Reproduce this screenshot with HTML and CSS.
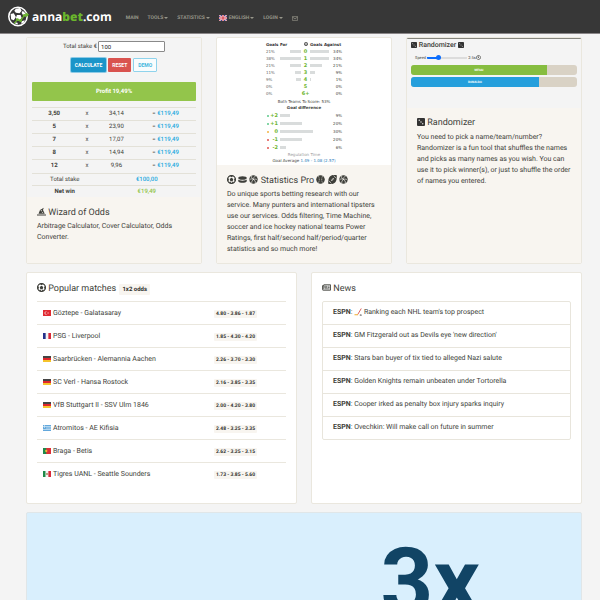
FILE: index.html
```html
<!DOCTYPE html>
<html lang="en">
<head>
    <meta charset="UTF-8">
    <meta name="viewport" content="width=device-width, initial-scale=1">
    <title>annabet.com</title>
    <link rel="stylesheet" href="styles.css">
</head>
<body>
    <!-- shared icons -->
    <svg class="defs" aria-hidden="true">
        <symbol id="ball" viewBox="0 0 16 16">
            <circle cx="8" cy="8" r="6.900" fill="none" stroke="currentColor" stroke-width="2.200"/>
            <path fill="currentColor" d="M8 4.800l3.200 2.300-1.200 3.800H6L4.800 7.100zM4.500 1h7L8 4zM.500 5.500l3 1.800L2 11.500.500 10zM15.500 5.500l-3 1.800 1.500 4.200 1.500-1.500zM3 12.500l3.500-.500.900 3.500zM13 12.500l-3.500-.500-.900 3.500z"/>
        </symbol>
        <symbol id="dice" viewBox="0 0 16 16">
            <rect x="0" y="0" width="16" height="16" rx="2" fill="#333"/>
            <g fill="#eee"><circle cx="4.500" cy="4.500" r="1.300"/><circle cx="8" cy="8" r="1.300"/><circle cx="11.500" cy="11.500" r="1.300"/></g>
        </symbol>
        <symbol id="puck" viewBox="0 0 18 16">
            <ellipse cx="9" cy="5" rx="8.500" ry="3.500" fill="currentColor"/>
            <path fill="currentColor" d="M.500 8c2 3 15 3 17 0v3.500c-2 4-15 4-17 0z"/>
        </symbol>
        <symbol id="volley" viewBox="0 0 16 16">
            <circle cx="8" cy="8" r="7.600" fill="currentColor"/>
            <path fill="none" stroke="#f8f5f0" stroke-width="1.200" d="M8 8c0-3 1-5 4-6.500M8 8C5.500 6.500 3 6.500.500 9M8 8c2.500 1.500 4 3.500 3 7M5 1.500C4 4 4.500 6 8 8M8 8c2.500-1 5-1 7 1M8 8c-2.500 1.500-3.500 4-3 7"/>
        </symbol>
        <symbol id="baseball" viewBox="0 0 16 16">
            <circle cx="8" cy="8" r="7.600" fill="currentColor"/>
            <path fill="none" stroke="#f8f5f0" stroke-width="1" stroke-dasharray="2 1" d="M4 1.500c2.500 4 2.500 9 0 13M12 1.500c-2.500 4-2.500 9 0 13"/>
        </symbol>
        <symbol id="football" viewBox="0 0 16 16">
            <path fill="currentColor" d="M15.500.500C7-2-1 2 .500 15.500 9 18 17 14 15.500.500z"/>
            <path fill="none" stroke="#f8f5f0" stroke-width="1.100" d="M5 11l6-6M6 8l2 2M8 6l2 2M1 10l5 5M10 1l5 5"/>
        </symbol>
        <symbol id="wizard" viewBox="0 0 18 16">
            <path fill="currentColor" d="M3 12.500L6 5 13.500.500 12 5l3.500 7.500zM0 13.800h18V16H0z"/>
            <path fill="#f8f5f0" d="M8.500 4.500l.600 1.500 1.500.500-1.500.500-.600 1.500-.600-1.500L6.400 6.500 7.900 6zM11 8.500l.500 1.200 1.200.400-1.200.400-.500 1.200-.500-1.200-1.200-.400 1.200-.400z"/>
        </symbol>
        <symbol id="paper" viewBox="0 0 20 16">
            <path fill="none" stroke="currentColor" stroke-width="2" d="M4 2h15v12H2.500Q1 14 1 12.500V4h3zM4 4v8.500"/>
            <path fill="none" stroke="currentColor" stroke-width="1.600" d="M6.500 5h4v3.500h-4zM12.500 5H17M12.500 8H17M6.500 11H17"/>
        </symbol>
        <symbol id="mail" viewBox="0 0 16 12">
            <path fill="none" stroke="currentColor" stroke-width="1.800" d="M1 1h14v10H1zM1 2l7 5 7-5"/>
        </symbol>
        <symbol id="clock" viewBox="0 0 16 16">
            <path fill="none" stroke="currentColor" stroke-width="2.200" d="M8 1.500a6.500 6.500 0 1 0 .1 0zM8 4.500v4l2.500 2M8 8L5 6"/>
        </symbol>
        <symbol id="stick" viewBox="0 0 16 16">
            <path fill="none" stroke="#d9534f" stroke-width="1.800" d="M14.500 1L7.500 13"/>
            <path fill="none" stroke="#f0ad2e" stroke-width="2.400" d="M8 13.500H1"/>
            <ellipse cx="13.500" cy="14" rx="2.200" ry="1.200" fill="#333"/>
        </symbol>
        <symbol id="gb" viewBox="0 0 16 12">
            <path fill="#2a3f8f" d="M0 0h16v12H0z"/>
            <path stroke="#fff" stroke-width="2.600" d="M0 0l16 12M16 0L0 12"/>
            <path stroke="#cf2b3c" stroke-width="1" d="M0 0l16 12M16 0L0 12"/>
            <path stroke="#fff" stroke-width="4" d="M8 0v12M0 6h16"/>
            <path stroke="#cf2b3c" stroke-width="2.200" d="M8 0v12M0 6h16"/>
        </symbol>
        <symbol id="tr" viewBox="0 0 16 12">
            <path fill="#e02a32" d="M0 0h16v12H0z"/>
            <circle cx="6" cy="6" r="3" fill="#fff"/><circle cx="6.900" cy="6" r="2.400" fill="#e02a32"/>
            <path fill="#fff" d="M9 6l2.500-1.200v2.400z"/>
        </symbol>
        <symbol id="fr" viewBox="0 0 16 12">
            <path fill="#25318a" d="M0 0h6v12H0z"/><path fill="#f4f4f4" d="M5.300 0h5.400v12H5.300z"/><path fill="#d8283a" d="M10.700 0H16v12h-5.300z"/>
        </symbol>
        <symbol id="de" viewBox="0 0 16 12">
            <path fill="#444" d="M0 0h16v4H0z"/><path fill="#e0262b" d="M0 4h16v4H0z"/><path fill="#f5c42c" d="M0 8h16v4H0z"/>
        </symbol>
        <symbol id="gr" viewBox="0 0 16 12">
            <path fill="#63a8dc" d="M0 0h16v12H0z"/>
            <path stroke="#d5e9f7" stroke-width="1.400" d="M6 3h10M6 6h10M0 9h16M3 0v6M0 3h6"/>
        </symbol>
        <symbol id="pt" viewBox="0 0 16 12">
            <path fill="#dc3038" d="M0 0h16v12H0z"/><path fill="#1e8a4a" d="M0 0h6.500v12H0z"/><circle cx="6.500" cy="6" r="2.300" fill="#e8b93a"/>
        </symbol>
        <symbol id="mx" viewBox="0 0 16 12">
            <path fill="#1e8a4a" d="M0 0h5.500v12H0z"/><path fill="#f4f4f4" d="M5.300 0h5.400v12H5.300z"/><path fill="#d8283a" d="M10.700 0H16v12h-5.300z"/><circle cx="8" cy="6" r="1.800" fill="#9a7a4a"/>
        </symbol>
    </svg>

    <header class="navbar">
        <a class="brand" href="#">
            <svg class="brand-ball" viewBox="0 0 40 40" aria-hidden="true">
                <circle cx="19" cy="20" r="17.500" fill="#373737" stroke="#fff" stroke-width="3"/>
                <path fill="#fff" d="M15 5l8-1 3 5-4 5-7-1-3-4zM28 9l5 5 1 6-5-2-3-5zM5 15l6-1 4 7-4 6-5-2zM17 17h7l2 6-6 5-5-5zM13 31l5 1 1 3-5-1zM26 29l6-2-2 5-5 2z"/>
                <path fill="none" stroke="#6ab52c" stroke-width="2.400" d="M12 33l6-7 6 2 7-10 5-1"/>
                <g fill="#6ab52c"><circle cx="18" cy="26" r="2.600"/><circle cx="24" cy="28" r="2.600"/><circle cx="31" cy="18" r="2.600"/><path d="M33 12l7 4-5 6z"/></g>
            </svg>
            <span>anna<b>bet</b>.com</span>
        </a>
        <nav class="menu">
            <a href="#">MAIN</a>
            <a class="drop" href="#">TOOLS</a>
            <a class="drop" href="#">STATISTICS</a>
            <a class="drop" href="#"><svg class="flag"><use href="#gb"/></svg>ENGLISH</a>
            <a class="drop" href="#">LOGIN</a>
            <a href="#" aria-label="Contact"><svg class="mail"><use href="#mail"/></svg></a>
        </nav>
    </header>

    <main class="container">
        <section class="cards three">
            <article class="card">
                <form class="calc" onsubmit="return false">
                    <div class="stake">
                        <label for="stake">Total stake €</label>
                        <input id="stake" type="text" value="100">
                    </div>
                    <div class="buttons">
                        <button class="calculate">CALCULATE</button>
                        <button class="reset" type="reset">RESET</button>
                        <button class="demo" type="button">DEMO</button>
                    </div>
                    <div class="profit">Profit 19,49%</div>
                    <table class="odds">
                        <tbody>
                            <tr><th>3,50</th><td>x</td><td>34,14</td><td>= <b>€119,49</b></td></tr>
                            <tr><th>5</th><td>x</td><td>23,90</td><td>= <b>€119,49</b></td></tr>
                            <tr><th>7</th><td>x</td><td>17,07</td><td>= <b>€119,49</b></td></tr>
                            <tr><th>8</th><td>x</td><td>14,94</td><td>= <b>€119,49</b></td></tr>
                            <tr><th>12</th><td>x</td><td>9,96</td><td>= <b>€119,49</b></td></tr>
                        </tbody>
                    </table>
                    <table class="totals">
                        <tbody>
                            <tr><td>Total stake</td><td class="blue">€100,00</td></tr>
                            <tr><th>Net win</th><td class="green">€19,49</td></tr>
                        </tbody>
                    </table>
                </form>
                <div class="card-body">
                    <h2><svg class="icon"><use href="#wizard"/></svg> Wizard of Odds</h2>
                    <p>Arbitrage Calculator, Cover Calculator, Odds Converter.</p>
                </div>
            </article>

            <article class="card">
                <div class="stats">
                    <table class="goals">
                        <colgroup><col class="pct"><col class="graph"><col class="num"><col class="graph"><col></colgroup>
                        <thead>
                            <tr><th colspan="2">Goals For</th><th class="mid"><svg class="mini"><use href="#ball"/></svg></th><th colspan="2">Goals Against</th></tr>
                        </thead>
                        <tbody>
                            <tr><td>21%</td><td class="for"><i style="width:54%"></i></td><th>0</th><td><i style="width:90%"></i></td><td>34%</td></tr>
                            <tr><td>38%</td><td class="for"><i style="width:98%"></i></td><th>1</th><td><i style="width:90%"></i></td><td>34%</td></tr>
                            <tr><td>21%</td><td class="for"><i style="width:54%"></i></td><th>2</th><td><i style="width:56%"></i></td><td>21%</td></tr>
                            <tr><td>11%</td><td class="for"><i style="width:28%"></i></td><th>3</th><td><i style="width:25%"></i></td><td>9%</td></tr>
                            <tr><td>9%</td><td class="for"><i style="width:23%"></i></td><th>4</th><td><i style="width:3%"></i></td><td>1%</td></tr>
                            <tr><td>0%</td><td class="for"></td><th>5</th><td></td><td>0%</td></tr>
                            <tr><td>0%</td><td class="for"></td><th>6+</th><td></td><td>0%</td></tr>
                        </tbody>
                    </table>
                    <p class="both">Both Teams To Score: 53%</p>
                    <p><b>Goal difference</b></p>
                    <table class="diff">
                        <tbody>
                            <tr><td><span class="dot win"></span></td><th>+2</th><td><i style="width:20%"></i></td><td>9%</td></tr>
                            <tr><td><span class="dot win"></span></td><th>+1</th><td><i style="width:46%"></i></td><td>20%</td></tr>
                            <tr><td><span class="dot draw"></span></td><th>0</th><td><i style="width:69%"></i></td><td>30%</td></tr>
                            <tr><td><span class="dot loss"></span></td><th>-1</th><td><i style="width:46%"></i></td><td>20%</td></tr>
                            <tr><td><span class="dot loss"></span></td><th>-2</th><td><i style="width:13%"></i></td><td>6%</td></tr>
                        </tbody>
                    </table>
                    <p class="muted">Regulation Time</p>
                    <p>Goal Average <span class="avg">1.49 - 1.08 (2.57)</span></p>
                </div>
                <div class="card-body">
                    <h2>
                        <svg class="icon"><use href="#ball"/></svg>
                        <svg class="icon"><use href="#puck"/></svg>
                        <svg class="icon"><use href="#volley"/></svg>
                        Statistics Pro
                        <svg class="icon"><use href="#baseball"/></svg>
                        <svg class="icon"><use href="#football"/></svg>
                        <svg class="icon"><use href="#volley"/></svg>
                    </h2>
                    <p>Do unique sports betting research with our service. Many punters and international tipsters use our services. Odds filtering, Time Machine, soccer and ice hockey national teams Power Ratings, first half/second half/period/quarter statistics and so much more!</p>
                </div>
            </article>

            <article class="card">
                <div class="random">
                    <h3><svg class="die"><use href="#dice"/></svg> Randomizer <svg class="die"><use href="#dice"/></svg></h3>
                    <div class="speed">
                        <label for="speed">Speed</label>
                        <input id="speed" type="range" min="0" max="100" value="25">
                        <span>2.5s</span><svg class="clock"><use href="#clock"/></svg>
                    </div>
                    <div class="bar"><span class="messi" style="width:82%">MESSI</span></div>
                    <div class="bar"><span class="ronaldo" style="width:77%">RONALDO</span></div>
                </div>
                <div class="card-body">
                    <h2><svg class="icon square"><use href="#dice"/></svg> Randomizer</h2>
                    <p>You need to pick a name/team/number? Randomizer is a fun tool that shuffles the names and picks as many names as you wish. You can use it to pick winner(s), or just to shuffle the order of names you entered.</p>
                </div>
            </article>
        </section>

        <section class="cards two">
            <article class="card panel">
                <h2><svg class="icon"><use href="#ball"/></svg> Popular matches <span class="badge big">1x2 odds</span></h2>
                <table class="matches">
                    <tbody>
                        <tr><td><svg class="flag"><use href="#tr"/></svg><a href="#">Göztepe - Galatasaray</a></td><td><span class="badge">4.80 - 3.86 - 1.87</span></td></tr>
                        <tr><td><svg class="flag"><use href="#fr"/></svg><a href="#">PSG - Liverpool</a></td><td><span class="badge">1.85 - 4.30 - 4.20</span></td></tr>
                        <tr><td><svg class="flag"><use href="#de"/></svg><a href="#">Saarbrücken - Alemannia Aachen</a></td><td><span class="badge">2.26 - 3.70 - 3.30</span></td></tr>
                        <tr><td><svg class="flag"><use href="#de"/></svg><a href="#">SC Verl - Hansa Rostock</a></td><td><span class="badge">2.16 - 3.85 - 3.35</span></td></tr>
                        <tr><td><svg class="flag"><use href="#de"/></svg><a href="#">VfB Stuttgart II - SSV Ulm 1846</a></td><td><span class="badge">2.00 - 4.20 - 3.80</span></td></tr>
                        <tr><td><svg class="flag"><use href="#gr"/></svg><a href="#">Atromitos - AE Kifisia</a></td><td><span class="badge">2.48 - 3.25 - 3.35</span></td></tr>
                        <tr><td><svg class="flag"><use href="#pt"/></svg><a href="#">Braga - Betis</a></td><td><span class="badge">2.62 - 3.25 - 3.15</span></td></tr>
                        <tr><td><svg class="flag"><use href="#mx"/></svg><a href="#">Tigres UANL - Seattle Sounders</a></td><td><span class="badge">1.73 - 3.85 - 5.60</span></td></tr>
                    </tbody>
                </table>
            </article>

            <article class="card panel">
                <h2><svg class="icon"><use href="#paper"/></svg> News</h2>
                <ul class="news">
                    <li><a href="#"><b>ESPN</b>: <svg class="stick"><use href="#stick"/></svg> Ranking each NHL team's top prospect</a></li>
                    <li><a href="#"><b>ESPN</b>: GM Fitzgerald out as Devils eye 'new direction'</a></li>
                    <li><a href="#"><b>ESPN</b>: Stars ban buyer of tix tied to alleged Nazi salute</a></li>
                    <li><a href="#"><b>ESPN</b>: Golden Knights remain unbeaten under Tortorella</a></li>
                    <li><a href="#"><b>ESPN</b>: Cooper irked as penalty box injury sparks inquiry</a></li>
                    <li><a href="#"><b>ESPN</b>: Ovechkin: Will make call on future in summer</a></li>
                </ul>
            </article>
        </section>

        <section class="promo">3x</section>
    </main>
</body>
</html>
```
FILE: styles.css
```css
*{box-sizing:border-box;}
body{margin:0;background:#f4f4f4;color:#3e3f3a;font:7px/11px Roboto,"Liberation Sans",sans-serif;text-rendering:geometricPrecision;}
a{color:inherit;text-decoration:none;}
h2,h3,p,ul{margin:0;padding:0;font-weight:400;}
ul{list-style:none;}
table{width:100%;border-collapse:collapse;table-layout:fixed;}
td,th{padding:0;}
.defs{position:absolute;width:0;height:0;}

/* navbar */
.navbar{display:flex;align-items:center;height:34px;padding-left:8px;background:#373737;border-bottom:1px solid #8a8688;}
.brand{display:flex;align-items:center;gap:3px;color:#fff;font:700 12px/20px "Open Sans",sans-serif;}
.brand b{color:#6ab52c;}
.brand-ball{width:21px;height:21px;}
.menu{display:flex;align-items:center;gap:9px;margin:3px 0 0 14px;color:#98978b;font-size:5px;line-height:8px;font-weight:700;}
.menu a{display:flex;align-items:center;}
.menu .flag{margin-right:2px;}
.drop:after{content:"";margin-left:1px;border:2px solid transparent;border-top-color:#98978b;border-bottom:0;}
.mail{width:6px;height:5px;}
.flag{width:8px;height:6px;}

/* cards */
.container{padding:3px 18px 0 26px;}
.cards{display:grid;gap:14px;margin-bottom:8px;}
.three{grid-template-columns:repeat(3,1fr);}
.two{grid-template-columns:repeat(2,1fr);}
.card{display:flex;flex-direction:column;min-width:0;overflow:hidden;background:#fff;border:1px solid #eae7de;border-radius:2px;}
.card-body{flex:1;padding:10px 10px 8px;background:#f8f5f0;}
.card-body p{margin-top:4px;}
h2{height:10px;font-size:9px;line-height:10px;white-space:nowrap;}
.icon{width:9px;height:9px;vertical-align:-1px;}

/* calculator */
.calc{padding:3px 5px 0;background:#f4f4f4;font-size:6px;}
.stake{display:flex;justify-content:center;align-items:center;gap:1px;}
.stake input{width:67px;height:11px;padding:0 2px;border:1px solid #8a8a8a;border-radius:1px;background:#fff;color:#222;font:inherit;}
.buttons{display:flex;justify-content:center;gap:2px;margin-top:6px;}
.buttons button{height:14px;padding:0 4px;border:0;border-radius:1px;color:#fff;font:700 5px/12px Roboto,sans-serif;}
.buttons .calculate{background:#1b95c9;box-shadow:0 0 0 1px #8fcbe6;}
.buttons .reset{background:#d9534f;}
.buttons .demo{background:#f8fcfd;border:1px solid #8fd3ec;color:#49b7dd;}
.profit{margin:10px 0 6px;background:#93c54b;border-radius:1px;color:#fff;font-weight:700;line-height:19px;text-align:center;}
.calc td,.calc th{height:13px;border-top:1px solid #e3e1d8;line-height:12px;text-align:center;}
.odds th{width:27%;}
.odds td:nth-child(2){width:13%;}
.odds td:nth-child(3){width:23%;}
.odds b,.blue{color:#29abe0;font-weight:500;}
.green{color:#93c54b;font-weight:500;}
.calc .totals td,.calc .totals th{height:12px;line-height:11px;}
.totals tr > :first-child{width:40%;}

/* statistics */
.stats{width:80px;max-width:100%;margin:0 auto;padding:3px 2px 1px;font:4px/6px "DejaVu Sans",sans-serif;text-align:center;}
.stats table th,.stats table td{height:7px;line-height:6px;}
.stats i{display:inline-block;height:3px;background:#d9dcdc;vertical-align:middle;}
.pct{width:14px;}
.graph{width:21px;}
.num{width:9px;}
.goals thead th{white-space:nowrap;color:#333;text-align:left;}
.goals thead .mid{text-align:center;}
.goals tbody th,.diff th{color:#6cb52d;font-size:5px;}
.goals td{text-align:left;}
.goals td:last-child,.diff td:last-child{text-align:right;}
.goals .for{text-align:right;}
.goals td:first-child{color:#666;}
.mini{width:4px;height:4px;}
.both{margin-top:2px;}
.diff{margin-top:1px;}
.stats .diff th,.stats .diff td{height:8px;}
.diff td:first-child{width:4px;}
.diff th{width:8px;text-align:right;}
.diff td:nth-child(3){text-align:left;padding-left:2px;}
.diff td:last-child{width:14px;}
.dot{display:inline-block;width:2px;height:2px;border-radius:1px;}
.win{background:#5cc98a;}
.draw{background:#f2b544;}
.loss{background:#e2534f;}
.muted{color:#999;}
.avg{color:#1b78b8;}

/* randomizer */
.random{height:70px;padding:1px 4px 0;background:#f4f4f4;border-top:1px solid #85857d;}
.random h3{font-size:7px;line-height:10px;font-weight:500;}
.die{width:6px;height:6px;vertical-align:-1px;}
.speed{display:flex;align-items:center;height:15px;padding-left:4px;font-size:4px;}
.speed input{width:40px;height:5px;margin:0 1px;appearance:none;border-radius:2px;background:linear-gradient(to right,#0d6efd 28%,#dcdcdc 28%) center/100% 2px no-repeat;}
.speed input::-webkit-slider-thumb{appearance:none;width:5px;height:5px;border-radius:50%;background:#0d6efd;}
.clock{width:5px;height:5px;}
.bar{margin-bottom:2px;overflow:hidden;border-radius:3px;background:#d9d2c5;}
.bar span{display:block;height:10px;color:#fff;font-size:3px;line-height:10px;font-weight:700;text-align:center;}
.messi{background:#86bd40;}
.ronaldo{background:#259fdc;}
.square{width:8px;height:8px;}

/* matches and news */
.panel{min-height:232px;padding:10px;}
.badge{padding:1px 2px;border-radius:1px;background:#f8f5f0;color:#2e2f2b;font-size:5px;line-height:7px;font-weight:700;}
.badge.big{margin-left:1px;padding:2px 3px;font-size:6px;}
.matches{margin-top:8px;}
.matches td{height:23px;border-top:1px solid #eae7de;}
.matches td:first-child{padding-left:6px;}
.matches td:last-child{width:72px;}
.matches .flag{margin-right:2px;vertical-align:-1px;}
.news{margin-top:8px;border:1px solid #e8e5dc;border-radius:2px;}
.news li{padding:5px 10px 6px;}
.news li + li{border-top:1px solid #e8e5dc;}
.stick{width:8px;height:8px;vertical-align:-2px;}

/* promo */
.promo{padding:34px 101px 60px 0;border:1px solid #e0e6e8;border-radius:2px;background:#d9effd;color:#114465;font-size:92px;line-height:72px;font-weight:700;text-align:right;}
```
